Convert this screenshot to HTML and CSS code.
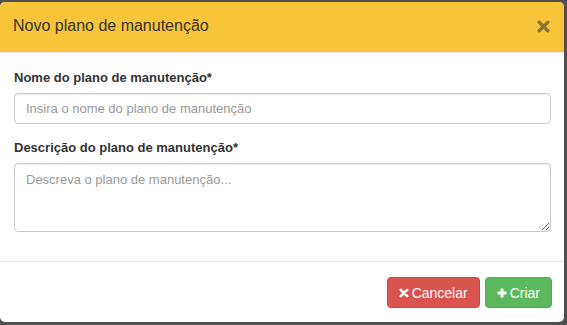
FILE: index.html
```html
<!DOCTYPE html>
<html lang="pt">
<head>
  <meta charset="UTF-8">
  <title>Novo plano de manutenção</title>
  <link rel="stylesheet" href="styles.css">
</head>
<body>

<div class="modal">
  <div class="modal-header">
    <h4 class="modal-title">Novo plano de manutenção</h4>
    <button class="close" type="button">
      <svg width="13" height="13" viewBox="0 0 13 13">
        <path d="M2.2 2.2 L10.8 10.8 M10.8 2.2 L2.2 10.8" stroke="currentColor" stroke-width="3.4" stroke-linecap="round"/>
      </svg>
    </button>
  </div>

  <div class="modal-body">
    <div class="form-group">
      <label>Nome do plano de manutenção*</label>
      <input type="text" class="form-control" placeholder="Insira o nome do plano de manutenção">
    </div>
    <div class="form-group">
      <label>Descrição do plano de manutenção*</label>
      <textarea class="form-control area" placeholder="Descreva o plano de manutenção..."></textarea>
    </div>
  </div>

  <div class="modal-footer">
    <button class="btn btn-danger" type="button">
      <svg width="10" height="10" viewBox="0 0 10 10">
        <path d="M1.8 1.8 L8.2 8.2 M8.2 1.8 L1.8 8.2" stroke="#fff" stroke-width="2.6" stroke-linecap="round"/>
      </svg>
      Cancelar
    </button>
    <button class="btn btn-success" type="button">
      <svg width="10" height="10" viewBox="0 0 10 10">
        <path d="M5 0.5 V9.5 M0.5 5 H9.5" stroke="#fff" stroke-width="2.8"/>
      </svg>
      Criar
    </button>
  </div>
</div>

</body>
</html>
```

FILE: styles.css
```css
body {
  margin: 0;
  background: #505050;
  font-family: "Liberation Sans", Arial, sans-serif;
  color: #333;
}

.modal {
  width: 564px;
  height: 320px;
  margin-top: 2px;
  background: #fff;
  border-radius: 5px;
  overflow: hidden;
  display: flex;
  flex-direction: column;
}

.modal-header {
  background: #f8c43a;
  padding: 13px 14px 15px 13px;
  border-bottom: 1px solid #e5e5e5;
  display: flex;
  align-items: center;
  justify-content: space-between;
}

.modal-title {
  margin: 0;
  font-size: 16px;
  line-height: 22px;
  font-weight: normal;
}

.close {
  border: 0;
  background: none;
  padding: 0;
  color: #8a7436;
  display: flex;
  cursor: pointer;
}

.modal-body {
  padding: 15px 13px 15px 14px;
}

.form-group {
  margin-bottom: 14px;
}

.form-group label {
  display: block;
  font-size: 13px;
  line-height: 20px;
  font-weight: bold;
  margin-bottom: 5px;
}

.form-control {
  display: block;
  width: 100%;
  box-sizing: border-box;
  height: 31px;
  padding: 5px 11px;
  font-family: "Liberation Sans", Arial, sans-serif;
  font-size: 13px;
  line-height: 19px;
  color: #555;
  border: 1px solid #ccc;
  border-radius: 4px;
  box-shadow: inset 0 1px 1px rgba(0, 0, 0, 0.075);
}

.form-control::placeholder {
  color: #999;
}

.area {
  height: 69px;
  padding-top: 6px;
  resize: vertical;
}

.modal-footer {
  border-top: 1px solid #e5e5e5;
  padding: 15px 12px 14px;
  display: flex;
  justify-content: flex-end;
  gap: 5px;
}

.btn {
  display: flex;
  align-items: center;
  gap: 3px;
  height: 31px;
  padding: 0 11px;
  font-family: "Liberation Sans", Arial, sans-serif;
  font-size: 14px;
  color: #fff;
  border: 1px solid transparent;
  border-radius: 4px;
  cursor: pointer;
}

.btn-danger {
  background: #d9534f;
  border-color: #d43f3a;
}

.btn-success {
  background: #5cb85c;
  border-color: #4cae4c;
}
```
